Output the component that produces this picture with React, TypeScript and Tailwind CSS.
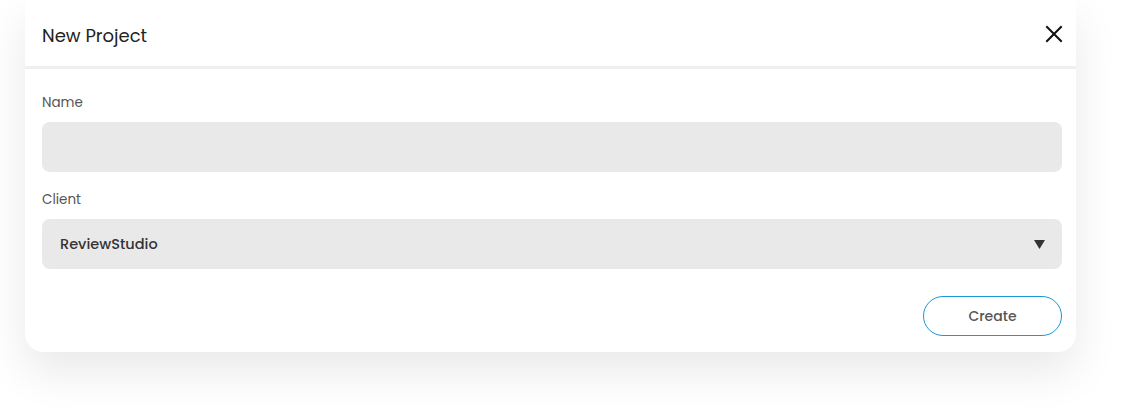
import React from "react";

export default function App() {
  const font = { fontFamily: "Poppins, Inter, 'Noto Sans', sans-serif" };
  return (
    <div className="w-[1121px] h-[417px] bg-white overflow-hidden" style={font}>
      <div className="ml-[25px] w-[1051px] bg-white rounded-b-[18px] shadow-[0_20px_45px_rgba(0,0,0,0.09)]">
        <div className="h-[66px] flex items-center justify-between pl-[17px] pr-[13px] pt-[4px]">
          <span className="text-[18px] text-[#222] font-normal">New Project</span>
          <svg width="18" height="18" viewBox="0 0 18 18" className="mt-[-2px]">
            <path d="M2 2 L16 16 M16 2 L2 16" stroke="#111" strokeWidth="2" strokeLinecap="square" fill="none" />
          </svg>
        </div>
        <div className="h-[3px] bg-[#efefef]" />
        <div className="pl-[17px] pr-[14px] pt-[24px] pb-[16px] flex flex-col">
          <label className="text-[13.5px] leading-[20px] text-[#555]">Name</label>
          <div className="mt-[9px] h-[50px] rounded-[8px] bg-[#e9e9e9]" />
          <label className="mt-[18px] text-[13.5px] leading-[20px] text-[#555]">Client</label>
          <div className="mt-[9px] h-[50px] rounded-[8px] bg-[#e9e9e9] flex items-center justify-between pl-[18px] pr-[17px]">
            <span className="text-[14.5px] font-medium text-[#333] mt-[2px]">ReviewStudio</span>
            <svg width="11" height="9" viewBox="0 0 11 9">
              <path d="M0 0 H11 L5.5 9 Z" fill="#333" />
            </svg>
          </div>
          <div className="mt-[27px] flex justify-end">
            <button className="w-[139px] h-[40px] rounded-full border border-[#1896d6] text-[14px] font-medium text-[#555] bg-white">
              Create
            </button>
          </div>
        </div>
      </div>
    </div>
  );
}
